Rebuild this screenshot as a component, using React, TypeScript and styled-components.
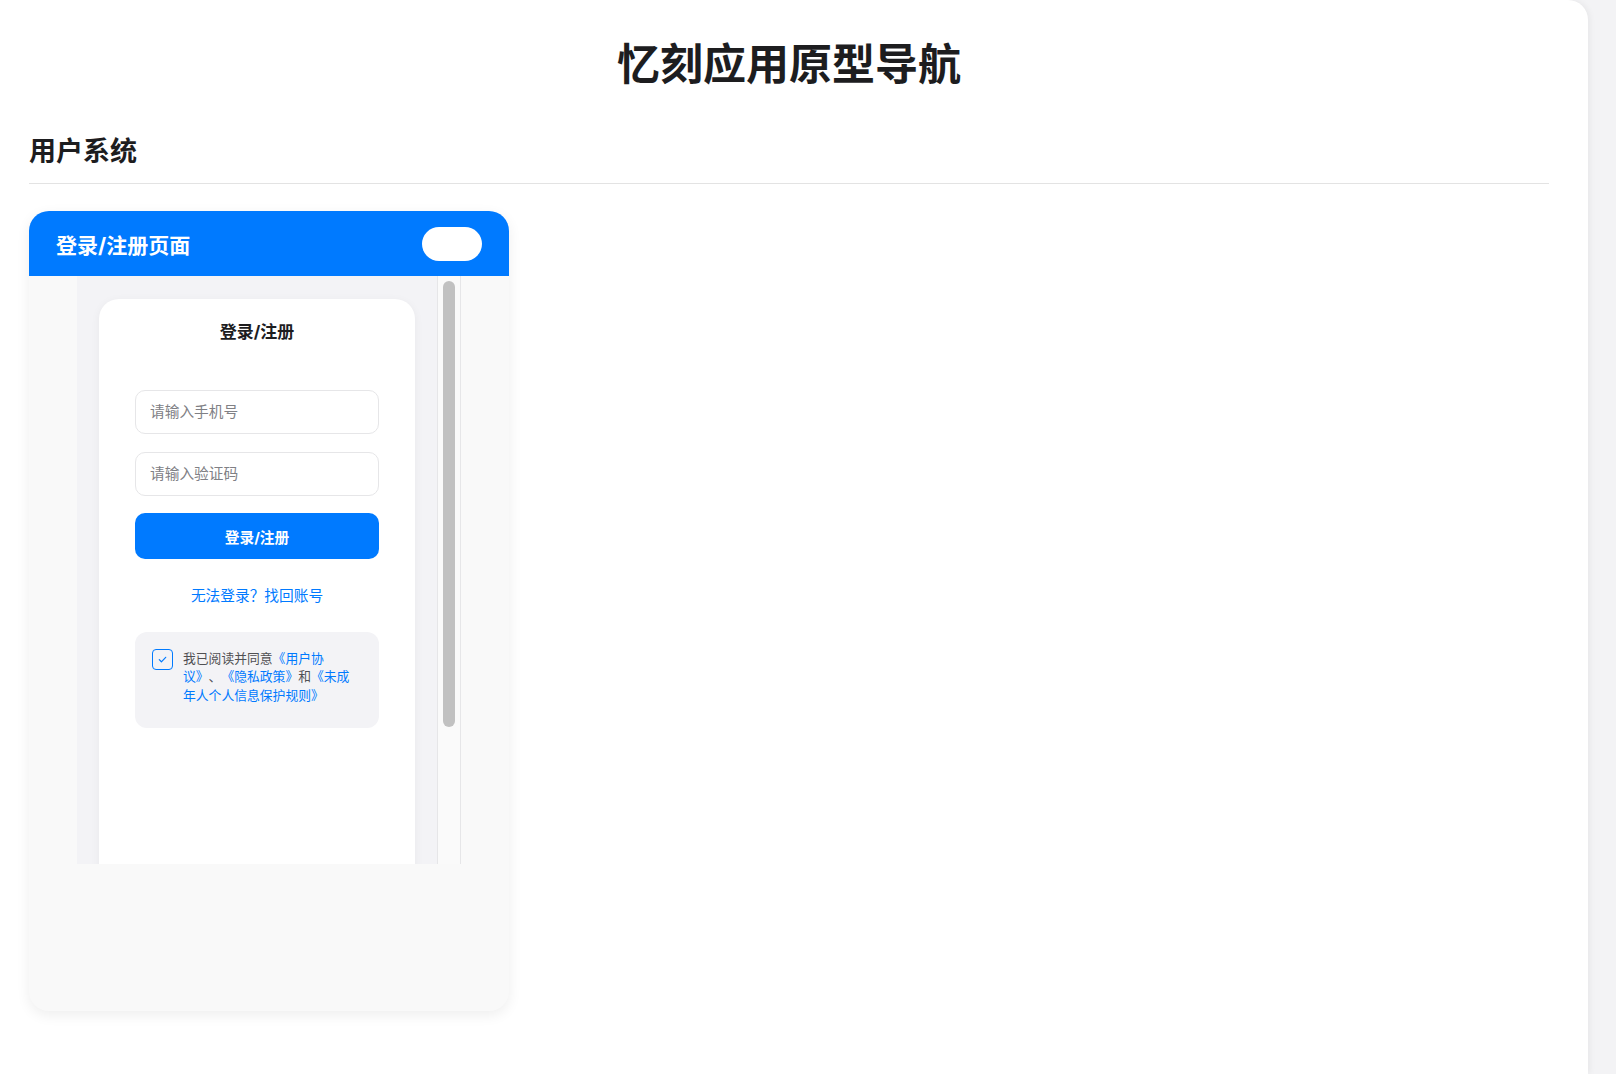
import React from 'react'
import styled, { createGlobalStyle } from 'styled-components'

const GlobalStyle = createGlobalStyle`
  * { box-sizing: border-box; }
  html, body {
    margin: 0;
    padding: 0;
    background: #f3f3f5;
    font-family: "Inter", "Noto Sans CJK SC", "Noto Sans", sans-serif;
    color: #1d1d1f;
    text-spacing-trim: space-all;
  }
`

const Panel = styled.main`
  width: 1588px;
  min-height: 100vh;
  background: #ffffff;
  border-top-right-radius: 20px;
  box-shadow: 2px 0 6px rgba(0, 0, 0, 0.05);
  padding: 39px 39px 40px 29px;
`

const PageTitle = styled.h1`
  margin: 0;
  font-size: 43px;
  line-height: 50px;
  font-weight: 700;
  text-align: center;
  color: #1d1d1f;
`

const SectionTitle = styled.h2`
  margin: 47px 0 0;
  padding-bottom: 16px;
  font-size: 27px;
  line-height: 31px;
  font-weight: 700;
  color: #1d1d1f;
  border-bottom: 1px solid #e3e3e3;
`

const CardGrid = styled.section`
  display: grid;
  grid-template-columns: repeat(auto-fill, 480px);
  gap: 28px;
  margin-top: 27px;
`

const PageCard = styled.article`
  width: 480px;
  border-radius: 20px;
  overflow: hidden;
  background: #f9f9f9;
  box-shadow: 0 4px 14px rgba(0, 0, 0, 0.07);
`

const CardHeader = styled.header`
  height: 65px;
  display: flex;
  align-items: center;
  justify-content: space-between;
  padding: 0 27px;
  background: #007aff;
`

const CardName = styled.h3`
  margin: 0;
  font-size: 21px;
  font-weight: 700;
  color: #ffffff;
`

const OpenPill = styled.button`
  width: 60px;
  height: 34px;
  border: none;
  border-radius: 17px;
  background: #ffffff;
  padding: 0;
`

const CardBody = styled.div`
  height: 735px;
  display: flex;
  justify-content: center;
`

const Frame = styled.div`
  width: 384px;
  height: 588px;
  display: flex;
`

const Screen = styled.div`
  width: 360px;
  overflow: hidden;
  background: #f3f3f6;
  padding: 23px 22px 0;
`

const ScrollTrack = styled.div`
  width: 24px;
  background: #fafafa;
  border-left: 1px solid #e6e6e8;
  border-right: 1px solid #e6e6e8;
  padding: 5px 5px 0;
`

const ScrollThumb = styled.div`
  width: 12px;
  height: 446px;
  border-radius: 6px;
  background: #c1c1c1;
`

const LoginCard = styled.div`
  min-height: 700px;
  background: #ffffff;
  border-radius: 20px;
  box-shadow: 0 2px 10px rgba(0, 0, 0, 0.05);
  padding: 21px 36px 0;
  display: flex;
  flex-direction: column;
`

const LoginTitle = styled.div`
  font-size: 17px;
  line-height: 24px;
  font-weight: 700;
  text-align: center;
  color: #1d1d1f;
  margin-bottom: 46px;
`

const Field = styled.input`
  height: 44px;
  width: 100%;
  border: 1px solid #e6e6e8;
  border-radius: 10px;
  background: #ffffff;
  padding: 0 14px;
  font-family: inherit;
  font-size: 14.7px;
  color: #1d1d1f;
  margin-bottom: 17.5px;
  outline: none;

  &::placeholder {
    color: #808085;
  }
`

const SubmitButton = styled.button`
  height: 46px;
  width: 100%;
  border: none;
  border-radius: 10px;
  background: #007aff;
  color: #ffffff;
  font-family: inherit;
  font-size: 14.7px;
  font-weight: 700;
`

const RecoverLink = styled.a`
  display: block;
  margin-top: 27px;
  font-size: 14.7px;
  line-height: 20px;
  text-align: center;
  color: #007aff;
  text-decoration: none;
`

const AgreementBox = styled.div`
  margin-top: 26px;
  display: flex;
  align-items: flex-start;
  gap: 10px;
  padding: 18px 20px 23px 17px;
  border-radius: 12px;
  background: #f3f3f6;
`

const CheckMark = styled.span`
  flex: none;
  width: 21px;
  height: 21px;
  margin-top: -1px;
  border: 1.5px solid #007aff;
  border-radius: 4px;
  display: flex;
  align-items: center;
  justify-content: center;
`

const AgreementText = styled.p`
  margin: 0;
  font-size: 12.8px;
  line-height: 18.3px;
  color: #505053;
`

const DocLink = styled.span`
  color: #007aff;
`

export default function App() {
  return (
    <>
      <GlobalStyle />
      <Panel>
        <PageTitle>忆刻应用原型导航</PageTitle>
        <SectionTitle>用户系统</SectionTitle>
        <CardGrid>
          <PageCard>
            <CardHeader>
              <CardName>登录/注册页面</CardName>
              <OpenPill aria-label="打开" />
            </CardHeader>
            <CardBody>
              <Frame>
                <Screen>
                  <LoginCard>
                    <LoginTitle>登录/注册</LoginTitle>
                    <Field placeholder="请输入手机号" />
                    <Field placeholder="请输入验证码" />
                    <SubmitButton>登录/注册</SubmitButton>
                    <RecoverLink href="#">无法登录？找回账号</RecoverLink>
                    <AgreementBox>
                      <CheckMark>
                        <svg width="11" height="11" viewBox="0 0 12 12" fill="none">
                          <path d="M2.5 6.2l2.3 2.3L9.5 3.6" stroke="#007aff" strokeWidth="1.3" strokeLinecap="round" strokeLinejoin="round" />
                        </svg>
                      </CheckMark>
                      <AgreementText>
                        我已阅读并同意<DocLink>《用户协议》</DocLink>、<DocLink>《隐私政策》</DocLink>和<DocLink>《未成年人个人信息保护规则》</DocLink>
                      </AgreementText>
                    </AgreementBox>
                  </LoginCard>
                </Screen>
                <ScrollTrack>
                  <ScrollThumb />
                </ScrollTrack>
              </Frame>
            </CardBody>
          </PageCard>
        </CardGrid>
      </Panel>
    </>
  )
}
